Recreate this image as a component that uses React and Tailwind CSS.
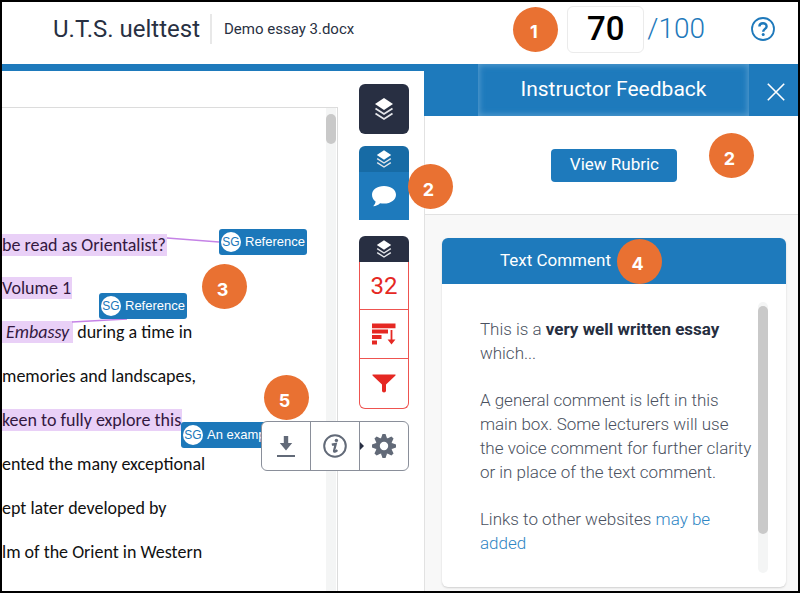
import { useState } from "react";
import clsx from "clsx";

const LINES = [
  { text: "be read as Orientalist?", marked: true },
  { text: "Volume 1", marked: true },
];

const BODY_LINES = [
  { text: "memories and landscapes," },
  { text: "keen to fully explore this", marked: true },
  { text: "ented the many exceptional" },
  { text: "ept later developed by" },
  { text: "lm of the Orient in Western" },
];

const TEETH = [0, 45, 90, 135, 180, 225, 270, 315];

const LayersIcon = ({ className }) => (
  <svg viewBox="0 0 20 24" className={className} fill="none" aria-hidden="true">
    <path d="M10 1 L19 7 L10 13 L1 7 Z" fill="#fff" />
    <path d="M1.5 11.5 L10 17 L18.5 11.5 M1.5 16.5 L10 22 L18.5 16.5" stroke="#e4e6ea" strokeWidth="1.8" />
  </svg>
);

const CommentIcon = () => (
  <svg viewBox="0 0 26 22" className="w-[26px] h-[22px]" fill="#fff" aria-hidden="true">
    <path d="M13 1 C20 1 25 4.8 25 9.8 C25 14.8 20 18.6 13 18.6 C11.6 18.6 10.3 18.5 9.1 18.2 C7.3 20 5 21 2.2 21.2 C3.6 19.8 4.4 18.4 4.6 16.6 C2.3 15 1 12.6 1 9.8 C1 4.8 6 1 13 1 Z" />
  </svg>
);

const SortIcon = () => (
  <svg viewBox="0 0 25 22" className="w-[25px] h-[22px]" fill="#e52823" aria-hidden="true">
    <path d="M1 0.5h23.5v4.8H1zM1 6.5h16v4H1zM1 12h9.5v4H1zM1 17.4h5v4H1z" />
    <path d="M19.6 7h1.8v9.6h3l-3.9 4.8-3.9-4.8h3z" />
  </svg>
);

const FilterIcon = () => (
  <svg viewBox="0 0 24 19" className="w-6 h-[19px]" fill="#e52823" aria-hidden="true">
    <path d="M0.5 0.5h23v1L14 10.5v6.2q0 1.8-2 1.8t-2-1.8v-6.2L0.5 1.5z" />
  </svg>
);

const DownloadIcon = () => (
  <svg viewBox="0 0 18 21" className="w-[18px] h-[21px]" fill="#626a78" aria-hidden="true">
    <path d="M6.8 0h4.4v7h4L9 14.5 2.8 7h4zM0 19h18v2H0z" />
  </svg>
);

const InfoIcon = () => (
  <svg viewBox="0 0 24 24" className="w-6 h-6" fill="none" aria-hidden="true">
    <circle cx="12" cy="12" r="10.8" stroke="#626a78" strokeWidth="2" />
    <circle cx="13.4" cy="6.4" r="1.7" fill="#626a78" />
    <path d="M8.8 10.6 L12.8 9.8 L11 17 Q11 18.8 14.4 16.2" stroke="#626a78" strokeWidth="2.2" />
  </svg>
);

const GearIcon = () => (
  <svg viewBox="-12 -12 24 24" className="w-6 h-6" aria-hidden="true">
    <circle r="6.2" fill="none" stroke="#626a78" strokeWidth="4" />
    {TEETH.map((angle) => (
      <path key={angle} d="M-3.2 -7.2 L-1.5 -12 H1.5 L3.2 -7.2 Z" fill="#626a78" transform={`rotate(${angle})`} />
    ))}
  </svg>
);

const HelpIcon = () => (
  <svg viewBox="0 0 24 24" className="w-6 h-6" fill="none" stroke="#1e79bb" aria-hidden="true">
    <circle cx="12" cy="12" r="11" strokeWidth="1.8" />
    <path d="M8.4 9.6 C8.4 5.2 15.6 5.2 15.6 9.4 C15.6 11.8 12.2 12 12.2 14.8" strokeWidth="2.4" />
    <circle cx="12.2" cy="17.6" r="1.5" fill="#1e79bb" stroke="none" />
  </svg>
);

const CloseIcon = () => (
  <svg viewBox="0 0 18 18" className="w-[18px] h-[18px]" stroke="#fff" strokeWidth="1.6" aria-hidden="true">
    <path d="M0.8 0.8 L17.2 17.2 M17.2 0.8 L0.8 17.2" />
  </svg>
);

const Step = ({ n, className }) => (
  <span className={clsx("flex items-center justify-center shrink-0 w-[45px] h-[45px] pt-1.5 pr-1 rounded-full bg-[#e97132] text-white text-lg font-bold font-['Inter',sans-serif]", className)}>
    {n}
  </span>
);

const Tag = ({ label, className }) => (
  <button type="button" className={clsx("absolute flex items-center gap-1 w-[88px] h-[26px] pl-0.5 rounded-[3px] overflow-hidden whitespace-nowrap bg-[#1c78ba] text-white text-[13px] font-['Liberation_Sans',sans-serif]", className)}>
    <span className="flex items-center justify-center shrink-0 w-5 h-5 rounded-full bg-white text-[#1c78ba] text-xs">SG</span>
    {label}
  </button>
);

const Line = ({ text, marked }) => (
  <p className="h-11 leading-11">
    {marked ? <mark className="bg-[#e9d0f7] text-[#33183f] pr-px">{text}</mark> : text}
  </p>
);

const Paper = () => (
  <section className="relative flex flex-1 min-w-0 mt-9 border-t border-r border-[#dcdcdc]">
    <div className="flex-1 min-w-0 pt-[116px] overflow-hidden whitespace-nowrap text-lg text-[#111] font-['Carlito','Lato',sans-serif]">
      {LINES.map((line) => (
        <p key={line.text} className="h-[43px] leading-[43px]">
          <mark className="bg-[#e9d0f7] text-[#33183f] pr-px">{line.text}</mark>
        </p>
      ))}
      <p className="h-11 leading-11">
        <mark className="bg-[#e9d0f7] text-[#33183f] pl-1 pr-1"><em>Embassy</em></mark> during a time in
      </p>
      {BODY_LINES.map((line) => <Line key={line.text} {...line} />)}
    </div>
    <div className="w-[10px] mr-px pt-1.5 bg-[#f4f5f5]">
      <div className="h-[30px] rounded-full bg-[#c9c9c9]" />
    </div>
    <svg className="absolute left-0 top-0 w-full h-[240px] pointer-events-none" stroke="#c583e6" strokeWidth="1.3" aria-hidden="true">
      <path d="M165 130 L217 134 M70 214 L125 211" />
    </svg>
    <Tag label="Reference" className="left-[217px] top-[121px]" />
    <Tag label="Reference" className="left-[97px] top-[185px]" />
    <Tag label="An examp" className="left-[179px] top-[314px]" />
    <Step n={3} className="absolute left-[200px] top-[156px]" />
  </section>
);

const LayerTools = () => (
  <nav aria-label="Layers" className="relative z-10 w-[86px] shrink-0 pt-[13px] pl-[21px]">
    <button type="button" aria-label="All layers" className="flex items-center justify-center w-[50px] h-[50px] rounded-md bg-[#282f42]">
      <LayersIcon className="w-5 h-6" />
    </button>

    <div className="relative w-[50px] mt-3">
      <button type="button" aria-label="Feedback layer" className="flex items-center justify-center w-full h-[26px] rounded-t-md bg-[#176ba5]">
        <LayersIcon className="w-4 h-5" />
      </button>
      <button type="button" aria-label="Comments" className="flex items-center justify-center w-full h-12 bg-[#1e7abc]">
        <CommentIcon />
      </button>
      <Step n={2} className="absolute left-[49px] top-[18px]" />
    </div>

    <div className="w-[50px] mt-4">
      <button type="button" aria-label="Similarity layer" className="flex items-center justify-center w-full h-[26px] rounded-t-md bg-[#282f42]">
        <LayersIcon className="w-4 h-5" />
      </button>
      <div className="flex flex-col border border-t-0 border-[#ee5350] rounded-b-md divide-y divide-[#ee5350]">
        <button type="button" className="h-12 text-2xl text-[#e52823]">32</button>
        <button type="button" aria-label="Match overview" className="flex items-center justify-center h-[49px]"><SortIcon /></button>
        <button type="button" aria-label="Filters" className="flex items-center justify-center h-[49px]"><FilterIcon /></button>
      </div>
    </div>

    <div className="relative w-[50px] h-[50px] mt-3">
      <div className="absolute right-0 top-0 flex h-full border border-[#8a8f9a] rounded-md bg-white divide-x divide-[#8a8f9a]">
        <button type="button" aria-label="Download" className="flex items-center justify-center w-[49px]"><DownloadIcon /></button>
        <button type="button" aria-label="Information" className="flex items-center justify-center w-[49px]"><InfoIcon /></button>
        <button type="button" aria-label="Settings" className="relative flex items-center justify-center w-12">
          <span className="absolute left-0 border-y-4 border-l-4 border-y-transparent border-l-[#282f42]" />
          <GearIcon />
        </button>
      </div>
      <Step n={5} className="absolute right-[100px] top-[-46px]" />
    </div>
  </nav>
);

const FeedbackPanel = () => (
  <aside className="flex flex-col w-[47%] shrink-0 bg-[#f8f8f8]">
    <div className="flex h-[52px] bg-[#1e7abc] text-white">
      <h2 className="flex flex-1 items-center justify-center ml-[54px] text-[21px] shadow-[inset_0_0_6px_1px_#5a9fd0]">Instructor Feedback</h2>
      <button type="button" aria-label="Close" className="flex items-center justify-center w-[49px] pl-1 pt-1"><CloseIcon /></button>
    </div>

    <div className="flex flex-col flex-1 border-l border-[#e2e2e2]">
      <div className="relative flex items-center justify-center h-[99px] pl-1.5 border-b border-[#e2e2e2] bg-white">
        <button type="button" className="w-[126px] h-[33px] rounded-[4px] bg-[#1e7abc] text-white text-[17px]">View Rubric</button>
        <Step n={2} className="absolute right-[44px] top-[17px]" />
      </div>

      <article className="flex flex-col flex-1 ml-[17px] mr-3 mt-[23px] mb-1 rounded-md bg-white shadow-[0_1px_2px_#cfcfcf]">
        <header className="flex items-center gap-1.5 h-[46px] pl-[58px] rounded-t-md bg-[#1e7abc] text-white">
          <h3 className="text-[17px]">Text Comment</h3>
          <Step n={4} />
        </header>
        <div className="flex flex-1 justify-between pt-[18px] pb-[14px] pl-[38px] pr-[18px]">
          <div className="flex-1 flex flex-col gap-[23px] pt-[15px] pr-1 text-[17px] leading-6 font-light text-[#4a5160]">
            <p>This is a <strong className="font-bold text-[#262e40]">very well written essay</strong> which...</p>
            <p>A general comment is left in this main box. Some lecturers will use the voice comment for further clarity or in place of the text comment.</p>
            <p>Links to other websites <a href="#links" className="text-[#2f86c4]">may be added</a></p>
          </div>
          <div className="w-[10px] pt-1 rounded-full bg-[#f4f5f5]">
            <div className="h-[228px] rounded-full bg-[#c9c9c9]" />
          </div>
        </div>
      </article>
    </div>
  </aside>
);

const App = () => {
  const [score, setScore] = useState("70");

  return (
    <div className="flex flex-col min-h-screen border-2 border-black bg-white font-['Roboto',sans-serif]">
      <header className="flex items-center h-[62px] pl-[51px] pr-[23px] pb-2 text-[#283042]">
        <h1 className="text-2xl">U.T.S. uelttest</h1>
        <span className="ml-2.5 pl-3 py-1 border-l-2 border-[#e8e8e8] text-[15px]">Demo essay 3.docx</span>
        <Step n={1} className="ml-auto" />
        <input
          aria-label="Score"
          value={score}
          onChange={(e) => setScore(e.target.value)}
          className="w-[77px] h-[47px] ml-[9px] border border-[#ebebeb] rounded-md text-center text-[33px] font-medium text-black"
        />
        <span className="ml-[3px] text-[28px] font-light text-[#1e79bb]">/100</span>
        <button type="button" aria-label="Help" className="ml-[46px]"><HelpIcon /></button>
      </header>

      <main className="flex flex-1">
        <div className="flex flex-1 min-w-0 border-t-[7px] border-[#1e7abc]">
          <Paper />
          <LayerTools />
        </div>
        <FeedbackPanel />
      </main>
    </div>
  );
};
export default App;
